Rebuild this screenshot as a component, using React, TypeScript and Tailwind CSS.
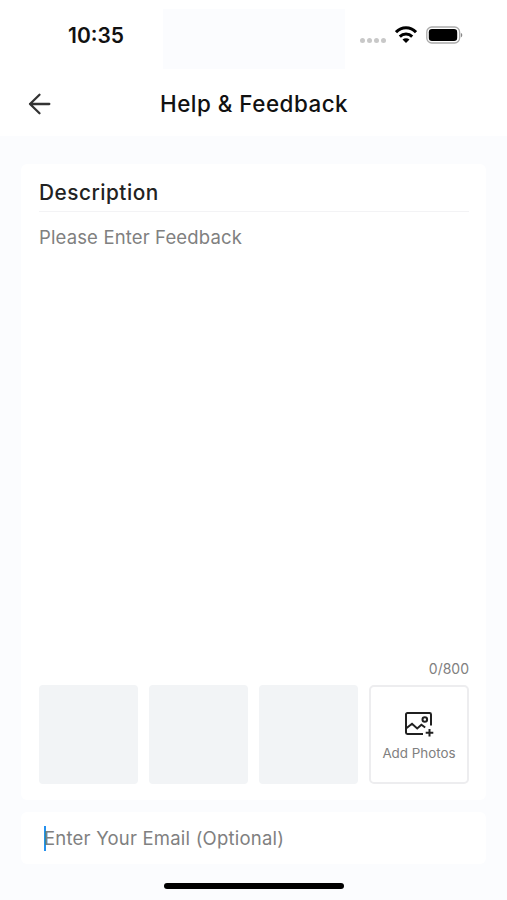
const photoSlots = [1, 2, 3];

function StatusBar() {
  return (
    <div className="flex h-[72px] items-start justify-between bg-white">
      <div className="w-[163px] pt-[21px] pl-[68px] text-[21px] leading-[29px] font-semibold whitespace-nowrap text-[#111]">
        10:35
      </div>
      <div className="mt-[9px] h-[60px] w-[182px] bg-[#fbfcfe]" />
      <div className="flex w-[162px] items-center pt-[26px] pl-[15px]">
        <div className="mt-[11px] flex gap-[2.5px]">
          {[0, 1, 2, 3].map((dot) => (
            <span key={dot} className="h-[4.5px] w-[4.5px] rounded-full bg-[#c8c8c8]" />
          ))}
        </div>
        <svg className="ml-[9.5px]" width="22" height="18" viewBox="0 0 22 18" fill="none" stroke="#000" strokeWidth="3">
          <path d="M1 6.2C6.6 0.4 15.4 0.4 21 6.2" />
          <path d="M4.8 10.6c3.5-3.4 8.9-3.4 12.4 0" />
          <path d="M11 17 7.5 13.6c2-1.8 5-1.8 7 0Z" fill="#000" stroke="none" />
        </svg>
        <svg className="ml-[9px]" width="37" height="18" viewBox="0 0 37 18">
          <rect x="0.8" y="1" width="32.8" height="16" rx="5" fill="#fff" stroke="#aaa" strokeWidth="1.3" />
          <rect x="2.8" y="3" width="28.4" height="12" rx="3.2" fill="#000" />
          <path d="M34.8 6.8c2 .9 2 3.7 0 4.6Z" fill="#888" />
        </svg>
      </div>
    </div>
  );
}

function Header() {
  return (
    <div className="flex h-16 items-center bg-white pl-7">
      <svg width="24" height="24" viewBox="0 0 24 24" fill="none" stroke="#333" strokeWidth="2.3" strokeLinecap="round" strokeLinejoin="round">
        <path d="M21.3 12H2M11.5 2.7 2 12l9.5 9.3" />
      </svg>
      <h1 className="ml-[108px] text-[22.4px] leading-8 font-medium tracking-[0.5px] whitespace-nowrap text-[#111]">
        Help &amp; Feedback
      </h1>
    </div>
  );
}

function AddPhotoIcon() {
  return (
    <svg width="30" height="26" viewBox="0 0 30 26" fill="none" stroke="#202020" strokeWidth="2">
      <path d="M27 14.5V3.4A1.4 1.4 0 0 0 25.6 2H3.4A1.4 1.4 0 0 0 2 3.4v18.2A1.4 1.4 0 0 0 3.4 23H19" />
      <path d="m2 17.5 6-4.7 5.2 4.7 4.2-3.7 3.8 2.7" />
      <circle cx="20.8" cy="8.5" r="2.3" />
      <path d="M25.5 18v7.6M21.7 21.8h7.6" />
    </svg>
  );
}

export default function App() {
  return (
    <div className="flex h-[900px] w-[507px] flex-col overflow-hidden bg-[#fbfcfe] font-['Inter',sans-serif]">
      <StatusBar />
      <Header />

      <section className="mx-[21px] mt-7 flex h-[636px] flex-col rounded-md bg-white pr-[17px] pl-[18px]">
        <h2 className="mt-3 h-9 border-b border-[#f3f3f5] text-[20.8px] leading-[33px] font-[450] tracking-[0.5px] text-[#222]">
          Description
        </h2>
        <p className="mt-[11px] text-[18.5px] leading-7 tracking-[0.14px] text-[#808080]">Please Enter Feedback</p>
        <div className="mt-auto text-right text-[14px] leading-5 text-[#808080]">0/800</div>
        <div className="mt-[6px] mb-4 flex justify-between">
          {photoSlots.map((slot) => (
            <div key={slot} className="h-[99px] w-[99px] rounded bg-[#f2f4f6]" />
          ))}
          <button className="flex h-[99px] w-[100px] flex-col items-center rounded-[5px] border-2 border-[#ededef] pt-6">
            <AddPhotoIcon />
            <span className="mt-[6px] text-[13.4px] leading-5 whitespace-nowrap text-[#808080]">Add Photos</span>
          </button>
        </div>
      </section>

      <div className="mx-[21px] mt-3 flex h-[52px] items-center rounded-md bg-white pl-[23px]">
        <span className="h-[25px] w-[2px] bg-[#2490ee]" />
        <span className="-ml-[2px] text-[18.5px] leading-7 tracking-[0.21px] whitespace-nowrap text-[#808080]">
          Enter Your Email (Optional)
        </span>
      </div>

      <div className="mx-auto mt-[19px] h-[6px] w-[180px] rounded-full bg-black" />
    </div>
  );
}
